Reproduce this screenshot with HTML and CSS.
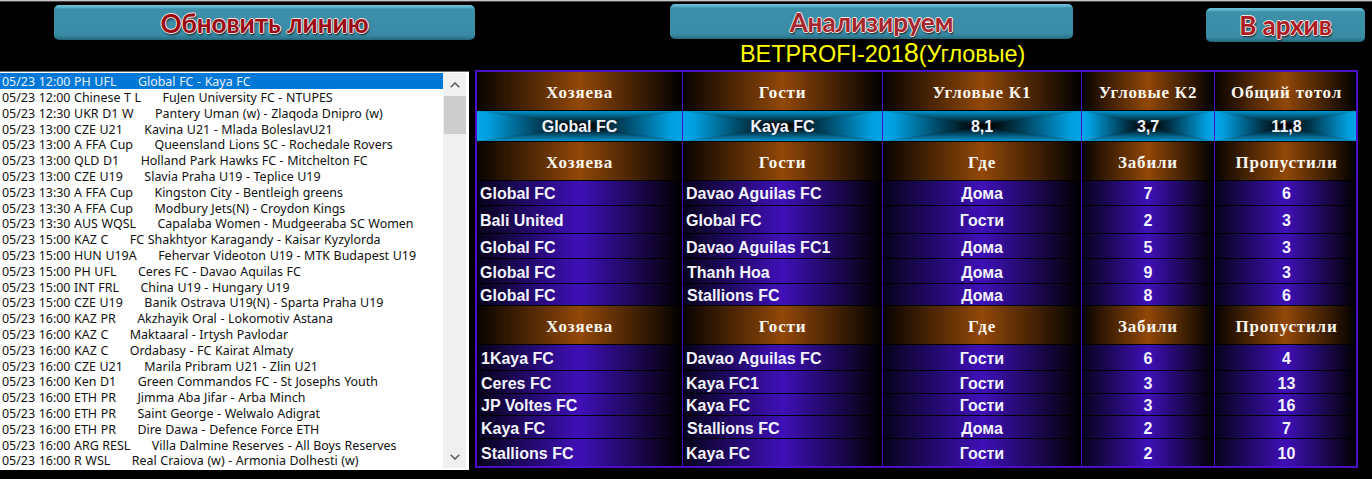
FILE: index.html
```html
<!DOCTYPE html>
<html lang="ru">
<head>
<meta charset="utf-8">
<title>BETPROFI-2018</title>
<link rel="stylesheet" href="styles.css">
</head>
<body>
<div class="topline"></div>
<div class="page">
  <section class="left">
    <button class="btn btn-update">Обновить линию</button>
    <div class="listbox">
      <ul class="rows">
        <li class="sel">05/23 12:00 PH UFL      Global FC - Kaya FC</li>
        <li>05/23 12:00 Chinese T L      FuJen University FC - NTUPES</li>
        <li>05/23 12:30 UKR D1 W      Pantery Uman (w) - Zlaqoda Dnipro (w)</li>
        <li>05/23 13:00 CZE U21      Kavina U21 - Mlada BoleslavU21</li>
        <li>05/23 13:00 A FFA Cup      Queensland Lions SC - Rochedale Rovers</li>
        <li>05/23 13:00 QLD D1      Holland Park Hawks FC - Mitchelton FC</li>
        <li>05/23 13:00 CZE U19      Slavia Praha U19 - Teplice U19</li>
        <li>05/23 13:30 A FFA Cup      Kingston City - Bentleigh greens</li>
        <li>05/23 13:30 A FFA Cup      Modbury Jets(N) - Croydon Kings</li>
        <li>05/23 13:30 AUS WQSL      Capalaba Women - Mudgeeraba SC Women</li>
        <li>05/23 15:00 KAZ C      FC Shakhtyor Karagandy - Kaisar Kyzylorda</li>
        <li>05/23 15:00 HUN U19A      Fehervar Videoton U19 - MTK Budapest U19</li>
        <li>05/23 15:00 PH UFL      Ceres FC - Davao Aquilas FC</li>
        <li>05/23 15:00 INT FRL      China U19 - Hungary U19</li>
        <li>05/23 15:00 CZE U19      Banik Ostrava U19(N) - Sparta Praha U19</li>
        <li>05/23 16:00 KAZ PR      Akzhayik Oral - Lokomotiv Astana</li>
        <li>05/23 16:00 KAZ C      Maktaaral - Irtysh Pavlodar</li>
        <li>05/23 16:00 KAZ C      Ordabasy - FC Kairat Almaty</li>
        <li>05/23 16:00 CZE U21      Marila Pribram U21 - Zlin U21</li>
        <li>05/23 16:00 Ken D1      Green Commandos FC - St Josephs Youth</li>
        <li>05/23 16:00 ETH PR      Jimma Aba Jifar - Arba Minch</li>
        <li>05/23 16:00 ETH PR      Saint George - Welwalo Adigrat</li>
        <li>05/23 16:00 ETH PR      Dire Dawa - Defence Force ETH</li>
        <li>05/23 16:00 ARG RESL      Villa Dalmine Reserves - All Boys Reserves</li>
        <li>05/23 16:00 R WSL      Real Craiova (w) - Armonia Dolhesti (w)</li>
      </ul>
      <div class="scrollbar">
        <svg class="arrow" viewBox="0 0 10 6" width="10" height="6"><path d="M0.7 5.3 5 1l4.3 4.3" fill="none" stroke="#606060" stroke-width="1.6"/></svg>
        <div class="thumb"></div>
        <svg class="arrow arrow-down" viewBox="0 0 10 6" width="10" height="6"><path d="M0.7 0.7 5 5l4.3-4.3" fill="none" stroke="#606060" stroke-width="1.6"/></svg>
      </div>
    </div>
  </section>
  <section class="right">
    <div class="bar">
      <div class="center">
        <button class="btn btn-analyze">Анализируем</button>
        <h1 class="title">BETPROFI-201<span class="big">8</span>(Угловые)</h1>
      </div>
      <button class="btn btn-archive">В архив</button>
    </div>
    <table class="stats">
      <colgroup>
        <col class="c1"><col class="c2"><col class="c3"><col class="c4"><col class="c5">
      </colgroup>
      <tbody>
        <tr class="head"><th>Хозяева</th><th>Гости</th><th>Угловые К1</th><th>Угловые К2</th><th>Общий тотол</th></tr>
        <tr class="match"><td><span>Global FC</span></td><td><span>Kaya FC</span></td><td><span>8,1</span></td><td><span>3,7</span></td><td><span>11,8</span></td></tr>
        <tr class="head"><th>Хозяева</th><th>Гости</th><th>Где</th><th>Забили</th><th>Пропустили</th></tr>
        <tr class="data h25"><td class="n">Global FC</td><td class="n">Davao Aguilas FC</td><td>Дома</td><td>7</td><td>6</td></tr>
        <tr class="data h28"><td class="n">Bali United</td><td class="n">Global FC</td><td>Гости</td><td>2</td><td>3</td></tr>
        <tr class="data h25 low"><td class="n">Global FC</td><td class="n">Davao Aguilas FC1</td><td>Дома</td><td>5</td><td>3</td></tr>
        <tr class="data h25 low"><td class="n">Global FC</td><td class="n m">Thanh Hoa</td><td>Дома</td><td>9</td><td>3</td></tr>
        <tr class="data h22"><td class="n">Global FC</td><td class="n m">Stallions FC</td><td>Дома</td><td>8</td><td>6</td></tr>
        <tr class="head"><th>Хозяева</th><th>Гости</th><th>Где</th><th>Забили</th><th>Пропустили</th></tr>
        <tr class="data h26"><td class="n m">1Kaya FC</td><td class="n">Davao Aguilas FC</td><td>Гости</td><td>6</td><td>4</td></tr>
        <tr class="data h23 low"><td class="n m">Ceres FC</td><td class="n">Kaya FC1</td><td>Гости</td><td>3</td><td>13</td></tr>
        <tr class="data h22"><td class="n m">JP Voltes FC</td><td class="n">Kaya FC</td><td>Гости</td><td>3</td><td>16</td></tr>
        <tr class="data h23 low"><td class="n m">Kaya FC</td><td class="n m">Stallions FC</td><td>Дома</td><td>2</td><td>7</td></tr>
        <tr class="data h27"><td class="n m">Stallions FC</td><td class="n">Kaya FC</td><td>Гости</td><td>2</td><td>10</td></tr>
      </tbody>
    </table>
  </section>
</div>
</body>
</html>
```
FILE: styles.css
```css
* { box-sizing: border-box; }
html, body { margin: 0; padding: 0; height: 100%; background: #000; overflow: hidden; }
.topline { height: 1px; background: #c8c8c8; box-shadow: 0 1px 0 #4a4a4a; }

.page { display: grid; grid-template-columns: 475px 897px; }

.btn {
  display: block;
  padding: 0;
  border: 0;
  border-radius: 5px;
  background: linear-gradient(180deg, #6cc3da 0, #5fb5cd 2px, #3d90aa 4px, #3a8ca6 85%, #2f7b94 93%, #256678 100%);
  color: #a5101a;
  font-family: Lato, "Open Sans", sans-serif;
  font-weight: 700;
  font-size: 26px;
  text-align: center;
  text-shadow: 1px 0 0 #f3e6e6, -1px 0 0 #f3e6e6, 0 1px 0 #f3e6e6, 0 -1px 0 #f3e6e6, 1px 2px 2px #222;
}
.btn-update { width: 421px; height: 35px; margin: 4px 0 0 54px; color: #9c0a12; }
.btn-analyze { width: 403px; height: 35px; margin-top: 3px; color: #a5262c; }
.btn-archive { width: 159px; height: 34px; margin: 7px 0 0 133px; color: #ad1c24; }

.listbox {
  display: flex;
  width: 469px;
  height: 399px;
  margin-top: 31px;
  padding-top: 1px;
  border-top: 1px solid #6a6a6a;
  background: #fff;
}
.rows {
  flex: 1;
  margin: 0;
  padding: 0;
  list-style: none;
  font: 12.45px/17px "Noto Sans", sans-serif;
  word-spacing: 0.35px;
  color: #111;
  overflow: hidden;
}
.rows li { padding-left: 2px; height: 15.8px; white-space: pre; }
.rows .sel { background: #0078d7; color: #e8f1fb; height: 16px; }

.scrollbar {
  display: flex;
  flex-direction: column;
  align-items: center;
  width: 23px;
  margin-right: 3px;
  margin-bottom: 2px;
  padding-top: 9px;
  background: #f0f0f0;
}
.arrow { display: block; flex: none; }
.thumb { width: 22px; height: 38px; margin-top: 8px; background: #cdcdcd; }
.arrow-down { margin-top: auto; margin-bottom: 8px; }

.bar { display: flex; align-items: flex-start; height: 69px; }
.center { margin-left: 195px; width: 403px; }
.title {
  margin: 1px -60px 0 0;
  padding-left: 70px;
  color: #ffff00;
  font: 400 23.4px/27px "Liberation Sans", Arial, sans-serif;
  white-space: nowrap;
}
.title .big { font-size: 27px; }

.stats {
  width: 883px;
  table-layout: fixed;
  border-collapse: separate;
  border-spacing: 0;
  border: 2px solid #4a10c8;
  color: #f4f4ff;
}
.c1 { width: 206px; }
.c2 { width: 200px; }
.c3 { width: 199px; }
.c4 { width: 133px; }
.c5 { width: 141px; }

.stats th, .stats td {
  padding: 2px 0 0;
  text-align: center;
  border-right: 1px solid #4a10c8;
  border-bottom: 1px solid #000;
}
.stats tr > :last-child { border-right: 0; padding-left: 2px; }
.stats tr:last-child td { border-bottom: 0; }
.stats .low td { padding-top: 4px; }

.head { height: 39px; }
.stats .head th {
  padding-top: 4px;
  background: linear-gradient(90deg, #070300 0, #924808 50%, #000 100%);
  font: 700 17px "Liberation Serif", "Times New Roman", serif;
  letter-spacing: 0.8px;
  color: #fbf7ee;
}

.match { height: 31px; }
.match td {
  position: relative;
  background: linear-gradient(90deg, #00a5e8 0, #00a0e0 5%, #000 47%, #000 53%, #00a0e0 95%, #00a5e8 100%);
  font: 700 16px "Liberation Sans", Arial, sans-serif;
}
.match td::before {
  content: "";
  position: absolute;
  inset: 0;
  background: linear-gradient(180deg, #0094cc 0, #000 47%, #000 53%, #0094cc 100%);
  clip-path: polygon(0 0, 100% 0, 50% 50%, 100% 100%, 0 100%, 50% 50%);
}
.match span { position: relative; }

.data td {
  background: linear-gradient(90deg, #06021a 0, #3f10b8 50%, #000 100%);
  font: 700 16px "Liberation Sans", Arial, sans-serif;
}
.data .n { text-align: left; padding-left: 3px; }
.data .m { padding-left: 4px; }
.h22 { height: 22px; }
.h23 { height: 23px; }
.h25 { height: 25px; }
.h26 { height: 26px; }
.h27 { height: 27px; }
.h28 { height: 28px; }
```
